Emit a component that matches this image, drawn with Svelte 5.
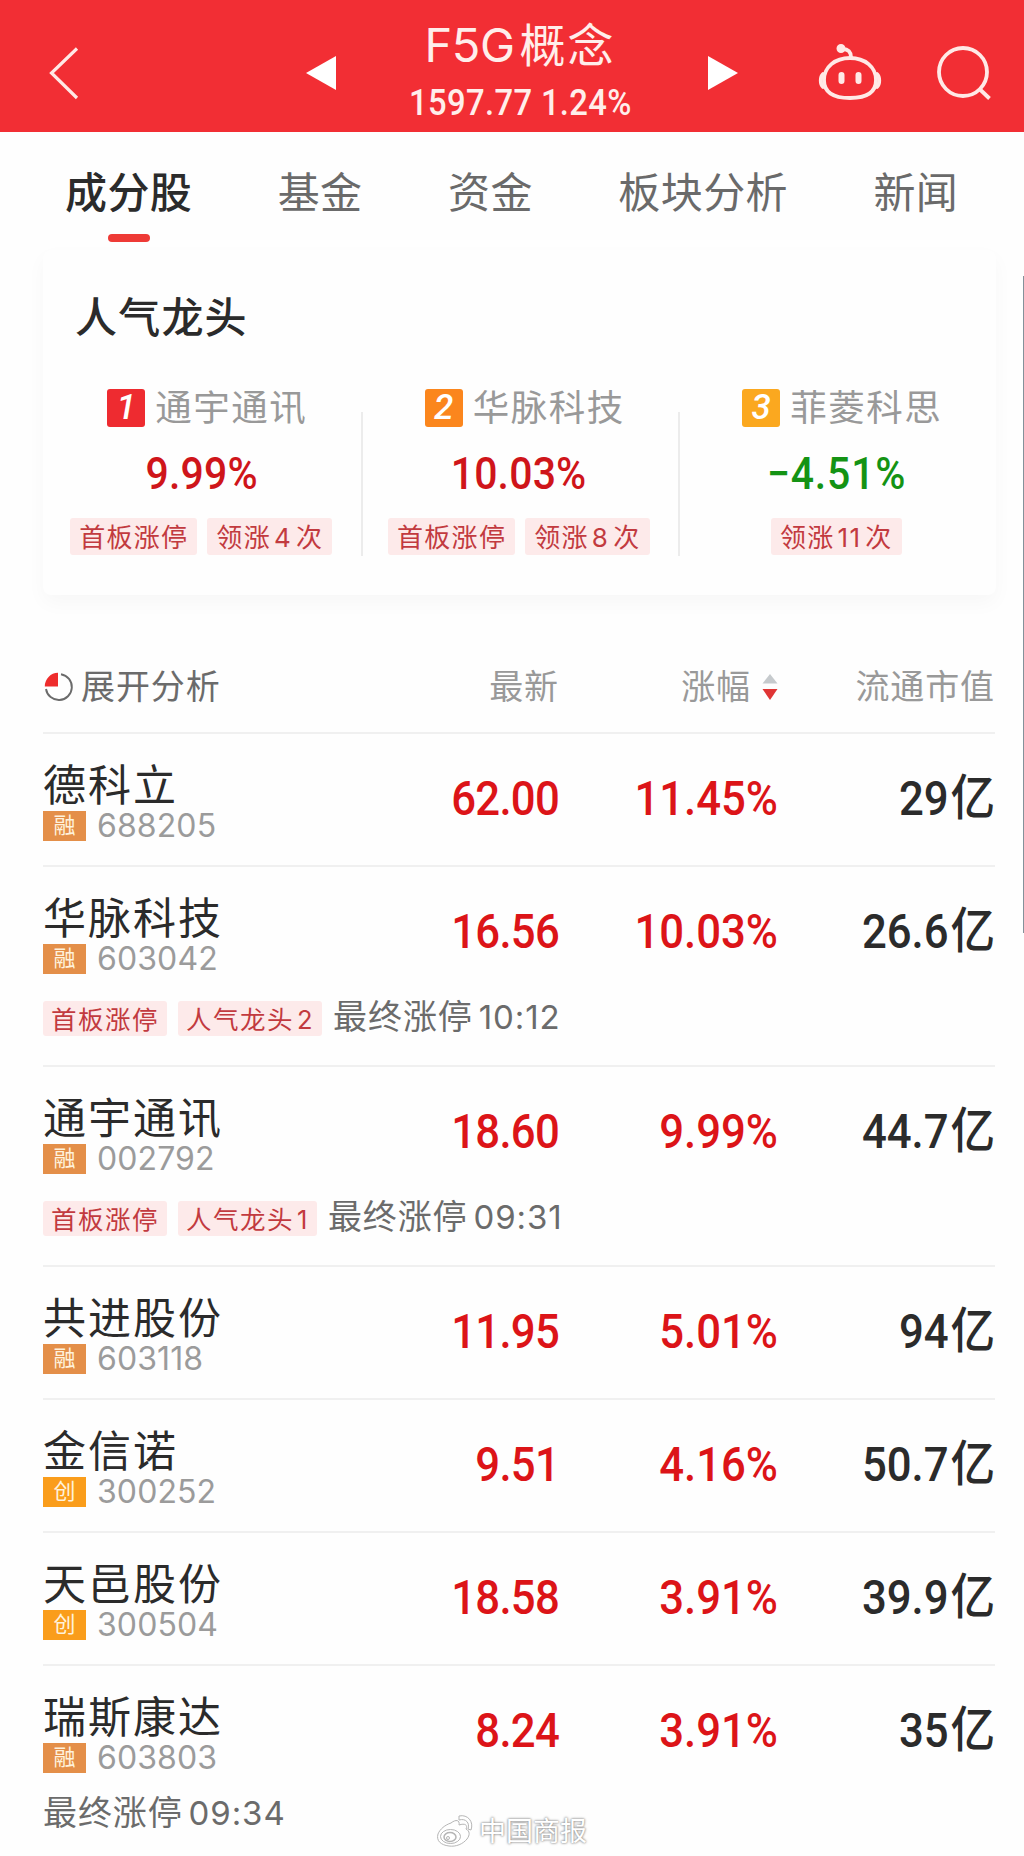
<script>
  const tabs = ['成分股', '基金', '资金', '板块分析', '新闻'];

  const leaders = [
    { rank: 1, name: '通宇通讯', change: '9.99%', tags: [['首板涨停'], ['领涨', '4', '次']] },
    { rank: 2, name: '华脉科技', change: '10.03%', tags: [['首板涨停'], ['领涨', '8', '次']] },
    { rank: 3, name: '菲菱科思', change: '−4.51%', down: true, tags: [['领涨', '11', '次']] },
  ];

  const stocks = [
    { name: '德科立', mark: '融', code: '688205', price: '62.00', change: '11.45%', cap: '29' },
    { name: '华脉科技', mark: '融', code: '603042', price: '16.56', change: '10.03%', cap: '26.6', tags: [['首板涨停'], ['人气龙头', '2']], time: '10:12' },
    { name: '通宇通讯', mark: '融', code: '002792', price: '18.60', change: '9.99%', cap: '44.7', tags: [['首板涨停'], ['人气龙头', '1']], time: '09:31' },
    { name: '共进股份', mark: '融', code: '603118', price: '11.95', change: '5.01%', cap: '94' },
    { name: '金信诺', mark: '创', code: '300252', price: '9.51', change: '4.16%', cap: '50.7' },
    { name: '天邑股份', mark: '创', code: '300504', price: '18.58', change: '3.91%', cap: '39.9' },
    { name: '瑞斯康达', mark: '融', code: '603803', price: '8.24', change: '3.91%', cap: '35', tags: [], time: '09:34' },
  ];
</script>

<div class="page">
  <header class="topbar">
    <svg class="back" width="34" height="56" viewBox="0 0 34 56" fill="none" stroke="#ffe9e6" stroke-width="3.2">
      <path d="M30 3.5 4.5 28 30 53" />
    </svg>
    <div class="switcher">
      <svg width="32" height="36" viewBox="0 0 32 36"><path d="M31 1v34L1 18z" fill="#fff" /></svg>
      <div class="board">
        <h1>F5G<span>概念</span></h1>
        <p class="din">1597.77 1.24%</p>
      </div>
      <svg width="32" height="36" viewBox="0 0 32 36"><path d="M1 1v34L31 18z" fill="#fff" /></svg>
    </div>
    <svg class="robot" width="64" height="60" viewBox="0 0 64 60" fill="none" stroke="#ffe9e6" stroke-width="3.8" stroke-linecap="round">
      <path d="M32 15c15 0 26 9 26 22 0 12-9 18-26 18S6 49 6 37c0-13 11-22 26-22z" />
      <path d="M5 31c-3 3-3 10 0 13M59 31c3 3 3 10 0 13" />
      <path d="M33 14c0-5-3-8-8-8" />
      <circle cx="23" cy="5.500" r="2.600" fill="#ffe9e6" />
      <path d="M23.500 32v6M40.500 32v6" stroke-width="6" />
    </svg>
    <svg class="search" width="56" height="56" viewBox="0 0 56 56" fill="none" stroke="#ffe9e6" stroke-width="3.8">
      <circle cx="27" cy="26" r="24" />
      <path d="m43.500 43 10 9.500" />
    </svg>
  </header>

  <nav class="tabs">
    {#each tabs as tab, i}
      <button class="tab" class:active={i === 0}>{tab}</button>
    {/each}
  </nav>

  <section class="card">
    <h2>人气龙头</h2>
    <div class="leaders">
      {#each leaders as item}
        <div class="leader">
          <div class="leader-name">
            <i class="rank rank-{item.rank}">{item.rank}</i>{item.name}
          </div>
          <div class="leader-change din" class:down={item.down}>{item.change}</div>
          <div class="leader-tags">
            {#each item.tags as tag}
              <span class="tag">{tag[0]}{#if tag[1]}<b>{tag[1]}</b>{/if}{tag[2] ?? ''}</span>
            {/each}
          </div>
        </div>
      {/each}
    </div>
  </section>

  <section class="list">
    <div class="list-head">
      <div class="expand">
        <svg width="30" height="30" viewBox="0 0 30 30">
          <path d="M17 2.200A13 13 0 1 1 2 17" fill="none" stroke="#6b6b6b" stroke-width="1.900" />
          <path d="M14 14.500H.8A13.500 13.500 0 0 1 14 .8z" fill="#ee2c2c" />
        </svg>
        展开分析
      </div>
      <div>最新</div>
      <div class="sort">
        涨幅
        <svg width="16" height="28" viewBox="0 0 16 28">
          <path d="M8 1l7.500 9.500H.5z" fill="#c6cacd" />
          <path d="M8 27 .5 16h15z" fill="#e03535" />
        </svg>
      </div>
      <div>流通市值</div>
    </div>

    {#each stocks as stock}
      <div class="stock">
        <div class="quote">
          <div class="ident">
            <div class="name">{stock.name}</div>
            <div class="code">
              <span class="mark" class:growth={stock.mark === '创'}>{stock.mark}</span>{stock.code}
            </div>
          </div>
          <div class="num din price">{stock.price}</div>
          <div class="num din">{stock.change}</div>
          <div class="num din cap">{stock.cap}<span>亿</span></div>
        </div>
        {#if stock.time}
          <div class="extra" class:plain={!stock.tags.length}>
            {#each stock.tags as tag}
              <span class="tag">{tag[0]}{#if tag[1]}<b>{tag[1]}</b>{/if}</span>
            {/each}
            <span class="limit">最终涨停<b>{stock.time}</b></span>
          </div>
        {/if}
      </div>
    {/each}
  </section>

  <div class="scrollbar"></div>

  <div class="watermark">
    <svg width="38" height="34" viewBox="0 0 38 34" fill="#fff" stroke="#b5b5b5" stroke-width="1">
      <path d="M15 8c5-4 9-3 8 2 6-2 9 0 7 4 4 2 4 6 1 10-4 5-11 8-18 7C5 30 0 26 2 19c2-5 7-9 13-11z" />
      <ellipse cx="14.500" cy="21.500" rx="10" ry="7" />
      <ellipse cx="14" cy="22" rx="6" ry="4.500" stroke-width="1.500" />
      <path d="M23 5c7-2 11 3 9 9l3 1c3-8-3-16-12-14z" />
      <circle cx="12" cy="23" r="1.500" />
    </svg>
    中国商报
  </div>
</div>

<style>
  :global(body) {
    background: #fefefe;
  }

  .page {
    position: relative;
    width: 1024px;
    height: 1856px;
    overflow: hidden;
    background: #fefefe;
    color: #2b2b2b;
    font-family: Inter, 'Noto Sans CJK SC', sans-serif;
  }

  h1,
  h2,
  p {
    margin: 0;
  }

  /* Roboto squeezed to the narrow figures of a DIN face */
  .din {
    font-family: Roboto, 'Noto Sans CJK SC', sans-serif;
    font-weight: 500;
    transform: scaleX(0.91);
  }

  .topbar {
    box-sizing: border-box;
    display: flex;
    align-items: center;
    height: 132px;
    padding: 14px 30px 0 47px;
    background: #f22e34;
    color: #ffeeeb;
  }

  .switcher {
    display: flex;
    align-items: center;
    justify-content: space-between;
    width: 434px;
    margin-left: 224px;
  }

  .board {
    display: flex;
    flex-direction: column;
    align-items: center;
    margin: -6px 4px 0 0;
    white-space: nowrap;
  }

  h1 {
    height: 66px;
    font-size: 47px;
    font-weight: 400;
    letter-spacing: -0.4px;
    line-height: 60px;
  }

  h1 span {
    margin-left: 5px;
    font-size: 46px;
    letter-spacing: 2px;
  }

  p {
    height: 44px;
    margin: 0 -20px;
    font-size: 36px;
    letter-spacing: 0.4px;
    line-height: 44px;
  }

  .robot {
    margin-left: 79px;
  }

  .search {
    margin: 2px 0 0 54px;
  }

  .tabs {
    display: flex;
    gap: 85.5px;
    height: 118px;
    padding-left: 65px;
  }

  .tab {
    display: flex;
    flex-direction: column;
    align-items: center;
    padding: 28px 0 0;
    border: none;
    background: none;
    color: #6a6a6a;
    font: 400 42px/60px 'Noto Sans CJK SC', sans-serif;
    letter-spacing: 0.4px;
  }

  .tab.active {
    color: #2b2b2b;
    font-weight: 500;
  }

  .tab.active::after {
    content: '';
    width: 42px;
    height: 8px;
    margin-top: 14px;
    border-radius: 4px;
    background: #ee3a36;
  }

  .card {
    box-sizing: border-box;
    width: 953px;
    height: 345px;
    margin-left: 43px;
    padding-top: 37px;
    border-radius: 8px;
    background: #fefefe;
    box-shadow: 0 8px 20px rgba(0, 0, 0, 0.03);
  }

  h2 {
    margin-left: 32px;
    font-size: 42px;
    font-weight: 500;
    letter-spacing: 1.2px;
    line-height: 62px;
  }

  .leaders {
    display: grid;
    grid-template-columns: repeat(3, 317.5px);
    margin: 37px 0 0 -1px;
  }

  .leader {
    display: flex;
    flex-direction: column;
    align-items: center;
    height: 170px;
    border-right: 2px solid transparent;
    margin-right: -3px;
    background: linear-gradient(#ececec, #ececec) right bottom / 2px 144px no-repeat border-box;
  }

  .leader:last-child {
    background: none;
  }

  .leader-name {
    display: flex;
    align-items: center;
    height: 44px;
    margin-left: 12px;
    color: #999;
    font-size: 36.5px;
    letter-spacing: 1.5px;
    line-height: 46px;
  }

  .rank {
    width: 38px;
    height: 38px;
    margin-right: 10px;
    border-radius: 3px;
    color: #fff;
    font: italic 500 35px/38px Roboto, sans-serif;
    letter-spacing: 0;
    text-align: center;
  }

  .rank-1 {
    background: #ee2b30;
  }

  .rank-2 {
    background: #fb861d;
  }

  .rank-3 {
    background: #fba81f;
  }

  .leader-change {
    margin-top: 17px;
    color: #cf151a;
    font-size: 45px;
    letter-spacing: 0.2px;
    line-height: 54px;
  }

  .leader-change.down {
    color: #149314;
    letter-spacing: 0.9px;
  }

  .leader-tags {
    display: flex;
    gap: 10px;
    margin-top: 17px;
  }

  .tag {
    height: 37px;
    padding: 0 9px;
    border-radius: 3px;
    background: #fdeaea;
    color: #c23a3f;
    font-size: 26px;
    letter-spacing: 1.3px;
    line-height: 40px;
    white-space: nowrap;
  }

  .tag b {
    margin: 0 4px 0 3px;
    font-weight: 400;
  }

  .list {
    margin: 49px 29px 0 43px;
  }

  .list-head,
  .quote {
    display: grid;
    grid-template-columns: 240px 276px 219px 217px;
  }

  .list-head {
    height: 88px;
    border-bottom: 2px solid #f0f0f0;
    color: #999;
    font-size: 34px;
    letter-spacing: 0.9px;
    line-height: 85px;
    text-align: right;
  }

  .expand,
  .sort {
    display: flex;
    align-items: center;
    height: 85px;
  }

  .expand {
    gap: 7px;
    padding-left: 1px;
    color: #6b6b6b;
  }

  .sort {
    justify-content: flex-end;
    gap: 11px;
  }

  .stock {
    border-bottom: 2px solid #f0f0f0;
  }

  .stock:last-child {
    border-bottom: none;
  }

  .quote {
    height: 131px;
  }

  .name {
    padding: 25px 0 0;
    font-size: 43px;
    letter-spacing: 2px;
    line-height: 52px;
    white-space: nowrap;
  }

  .code {
    display: flex;
    align-items: center;
    height: 30px;
    color: #9b9b9b;
    font-size: 32px;
    font-weight: 400;
    letter-spacing: 0.1px;
    line-height: 32px;
  }

  .mark {
    width: 43px;
    height: 30px;
    margin-right: 11px;
    background: #e48f49;
    color: #fff2dc;
    font-size: 22px;
    letter-spacing: 0;
    line-height: 29px;
    text-align: center;
  }

  .mark.growth {
    background: #fa9d1b;
  }

  .num {
    color: #dc1418;
    font-size: 48px;
    line-height: 129px;
    text-align: right;
    transform-origin: right;
  }

  .num.price {
    letter-spacing: -0.8px;
  }

  .num.cap {
    color: #2b2b2b;
  }

  .cap span {
    margin-left: 2px;
    font-size: 49px;
  }

  .extra {
    display: flex;
    align-items: center;
    gap: 11px;
    height: 67px;
  }

  .extra .tag {
    height: 35px;
    margin-top: -27px;
    padding: 0 8px;
    font-size: 25.500px;
    letter-spacing: 1.5px;
    line-height: 38px;
  }

  .extra .tag b {
    margin-right: 0;
  }

  .limit {
    margin-top: -29px;
    color: #6b6b6b;
    font-size: 34px;
    letter-spacing: 0.9px;
    line-height: 40px;
  }

  .limit b {
    margin-left: 6px;
    font-size: 33px;
    font-weight: 400;
  }

  .extra.plain {
    margin-top: -3px;
  }

  .scrollbar {
    position: absolute;
    top: 276px;
    right: 0;
    width: 1px;
    height: 657px;
    background: #84919a;
  }

  .watermark {
    position: absolute;
    top: 1813px;
    left: 436px;
    display: flex;
    align-items: center;
    gap: 5px;
    color: #fff;
    font-size: 27px;
    line-height: 38px;
    text-shadow: 0 0 2px #888, 0 0 3px #999;
  }
</style>
